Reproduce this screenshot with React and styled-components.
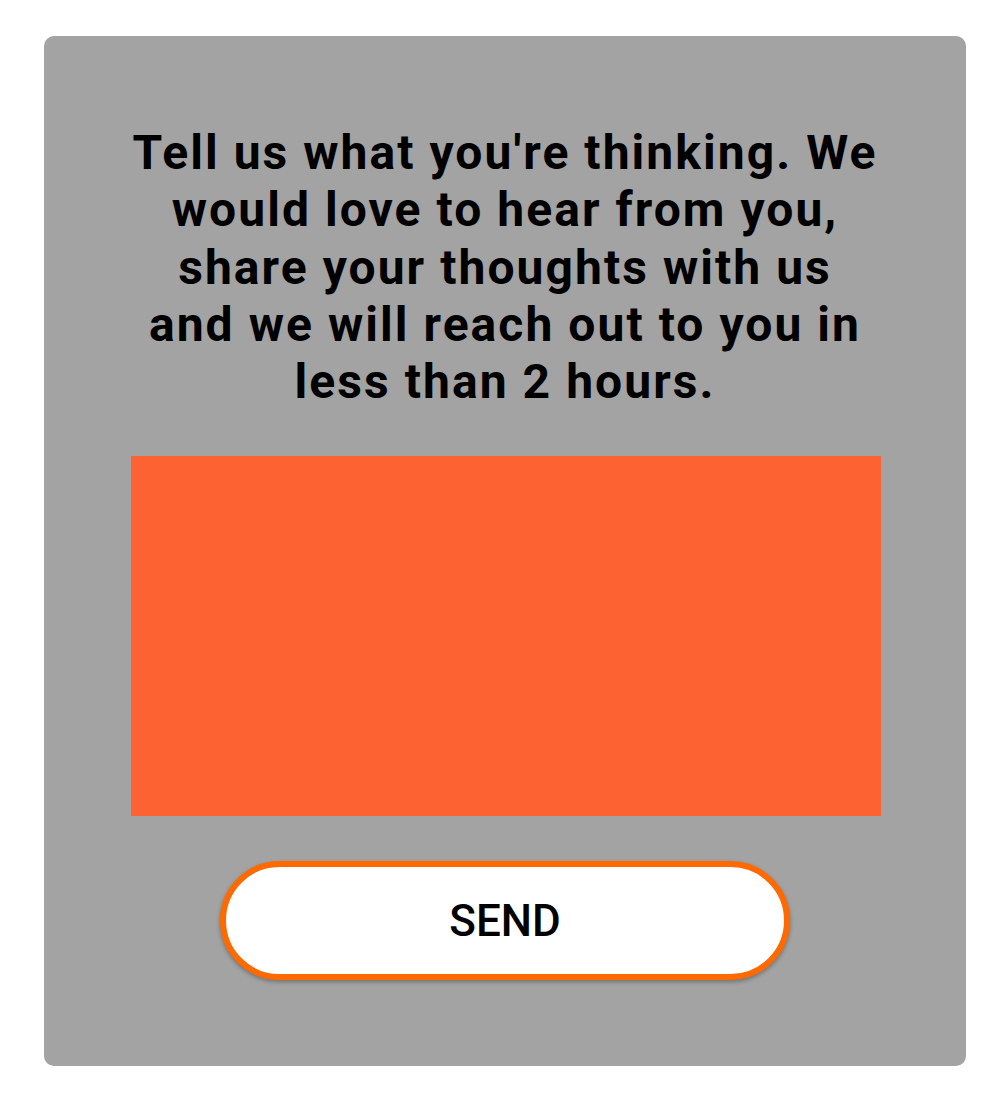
import React from 'react';
import styled, { createGlobalStyle } from 'styled-components';

const GlobalStyle = createGlobalStyle`
    body {
        margin: 0;
        background: #ffffff;
        font-family: Roboto, "Liberation Sans", sans-serif;
    }
`;

const Page = styled.div`
    padding: 36px 0 34px 44px;
`;

const Card = styled.form`
    width: 922px;
    height: 1030px;
    box-sizing: border-box;
    padding: 88px 0 0;
    display: flex;
    flex-direction: column;
    align-items: center;
    background-color: #a3a3a3;
    border-radius: 10px;
`;

const Prompt = styled.h1`
    width: 746px;
    margin: 0;
    font-size: 48px;
    line-height: 57.25px;
    font-weight: 700;
    letter-spacing: 2.05px;
    text-align: center;
    color: #000000;
`;

const Message = styled.textarea`
    width: 750px;
    height: 360px;
    margin: 46px 0 0 2px;
    box-sizing: border-box;
    border: none;
    outline: none;
    resize: none;
    background-color: #fc6232;
`;

const SendButton = styled.button`
    width: 570px;
    height: 119px;
    margin-top: 45px;
    box-sizing: border-box;
    border: 6px solid #ff6a00;
    border-radius: 60px;
    background-color: #ffffff;
    box-shadow: 0 2px 4px rgba(0, 0, 0, 0.3);
    font-family: Roboto, "Liberation Sans", sans-serif;
    font-size: 44px;
    font-weight: 500;
    color: #000000;
    cursor: pointer;
`;

export default function App() {
    return <>
        <GlobalStyle/>
        <Page>
            <Card onSubmit={e => e.preventDefault()}>
                <Prompt>
                    Tell us what you're thinking. We would love to hear from you, share your thoughts with us and we will reach out to you in less than 2 hours.
                </Prompt>
                <Message/>
                <SendButton type="submit">SEND</SendButton>
            </Card>
        </Page>
    </>;
}
